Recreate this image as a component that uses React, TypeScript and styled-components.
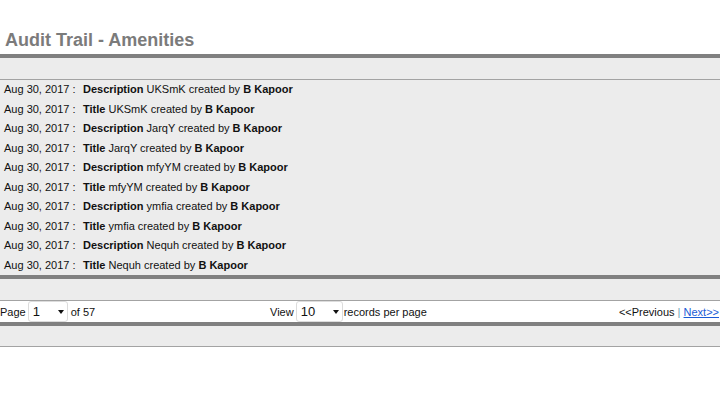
import React, { useState } from 'react';
import styled, { createGlobalStyle } from 'styled-components';

interface AuditEntry {
  date: string;
  field: string;
  value: string;
  user: string;
}

const ENTRIES: AuditEntry[] = [
  { date: 'Aug 30, 2017', field: 'Description', value: 'UKSmK', user: 'B Kapoor' },
  { date: 'Aug 30, 2017', field: 'Title', value: 'UKSmK', user: 'B Kapoor' },
  { date: 'Aug 30, 2017', field: 'Description', value: 'JarqY', user: 'B Kapoor' },
  { date: 'Aug 30, 2017', field: 'Title', value: 'JarqY', user: 'B Kapoor' },
  { date: 'Aug 30, 2017', field: 'Description', value: 'mfyYM', user: 'B Kapoor' },
  { date: 'Aug 30, 2017', field: 'Title', value: 'mfyYM', user: 'B Kapoor' },
  { date: 'Aug 30, 2017', field: 'Description', value: 'ymfia', user: 'B Kapoor' },
  { date: 'Aug 30, 2017', field: 'Title', value: 'ymfia', user: 'B Kapoor' },
  { date: 'Aug 30, 2017', field: 'Description', value: 'Nequh', user: 'B Kapoor' },
  { date: 'Aug 30, 2017', field: 'Title', value: 'Nequh', user: 'B Kapoor' },
];

const GlobalStyle = createGlobalStyle`
  body {
    margin: 0;
    background: #fff;
    font-family: "Liberation Sans", Arial, sans-serif;
    font-size: 11px;
    color: #111;
  }
`;

const AuditTrail = () => {
  const [page, setPage] = useState('1');
  const [perPage, setPerPage] = useState('10');

  return (
    <>
      <GlobalStyle />
      <Header>
        <Title>Audit Trail - Amenities</Title>
      </Header>
      <ThickRule />
      <Band />
      <ThinRule />
      <List>
        {ENTRIES.map((ele, i) => (
          <Row key={i}>
            <DateCell>{ele.date} :</DateCell>
            <span>
              <b>{ele.field}</b> {ele.value} created by <b>{ele.user}</b>
            </span>
          </Row>
        ))}
      </List>
      <ThickRule />
      <Band />
      <ThinRule />
      <Pager>
        <PagerGroup>
          Page
          <SelectWrap $width={40} $left={2}>
            <Select value={page} onChange={(e) => setPage(e.target.value)}>
              {Array.from({ length: 57 }, (_, i) => (
                <option key={i} value={String(i + 1)}>
                  {i + 1}
                </option>
              ))}
            </Select>
            <Caret />
          </SelectWrap>
          <Gap>of 57</Gap>
        </PagerGroup>
        <PagerGroup>
          View
          <SelectWrap $width={47} $left={2}>
            <Select value={perPage} onChange={(e) => setPerPage(e.target.value)}>
              <option value="10">10</option>
              <option value="25">25</option>
              <option value="50">50</option>
            </Select>
            <Caret />
          </SelectWrap>
          <span>records per page</span>
        </PagerGroup>
        <Nav>
          &lt;&lt;Previous <Divider>|</Divider> <NavLink href="#">Next&gt;&gt;</NavLink>
        </Nav>
      </Pager>
      <ThickRule />
      <Band $height={20} />
      <ThinRule />
    </>
  );
};

const Header = styled.div`
  height: 54px;
  display: flex;
  align-items: flex-end;
`;

const Title = styled.h1`
  margin: 0 0 3px 5px;
  font-size: 18px;
  line-height: 22px;
  font-weight: bold;
  color: #7b7b7b;
`;

const ThickRule = styled.div`
  height: 4px;
  background: #808080;
`;

const ThinRule = styled.div`
  height: 1px;
  background: #a3a3a3;
`;

const Band = styled.div<{ $height?: number }>`
  height: ${(p) => p.$height ?? 21}px;
  background: #ececec;
`;

const List = styled.div`
  background: #ececec;
`;

const Row = styled.div`
  box-sizing: border-box;
  height: 19.5px;
  padding: 0 0 1px 4px;
  display: grid;
  grid-template-columns: 79px 1fr;
  align-items: center;
  white-space: nowrap;
  color: #111;

  b {
    font-weight: bold;
  }
`;

const DateCell = styled.span`
  color: #111;
`;

const Pager = styled.div`
  height: 21px;
  display: grid;
  grid-template-columns: 270px 1fr auto;
  align-items: center;
  background: #fff;
`;

const PagerGroup = styled.div`
  display: flex;
  align-items: center;
  white-space: nowrap;
`;

const SelectWrap = styled.div<{ $width: number; $left?: number }>`
  position: relative;
  width: ${(p) => p.$width}px;
  height: 21px;
  margin-left: ${(p) => p.$left ?? 0}px;
  margin-right: 1px;
  box-sizing: border-box;
`;

const Select = styled.select`
  appearance: none;
  -webkit-appearance: none;
  width: 100%;
  height: 100%;
  box-sizing: border-box;
  border: 1px solid #dcdcdc;
  border-radius: 3px;
  background: #fff;
  padding: 0 0 0 4px;
  font-family: "Liberation Sans", Arial, sans-serif;
  font-size: 13px;
  color: #111;
  outline: none;
`;

const Caret = styled.span`
  position: absolute;
  right: 4px;
  top: 9px;
  width: 0;
  height: 0;
  border-left: 3.5px solid transparent;
  border-right: 3.5px solid transparent;
  border-top: 4px solid #111;
  pointer-events: none;
`;

const Gap = styled.span`
  margin-left: 2px;
`;

const Nav = styled.div`
  white-space: nowrap;
  padding-right: 1px;
  color: #111;
`;

const Divider = styled.span`
  color: #6a9fb5;
`;

const NavLink = styled.a`
  color: #1a5bd6;
  text-decoration: underline;
`;

export default AuditTrail;
